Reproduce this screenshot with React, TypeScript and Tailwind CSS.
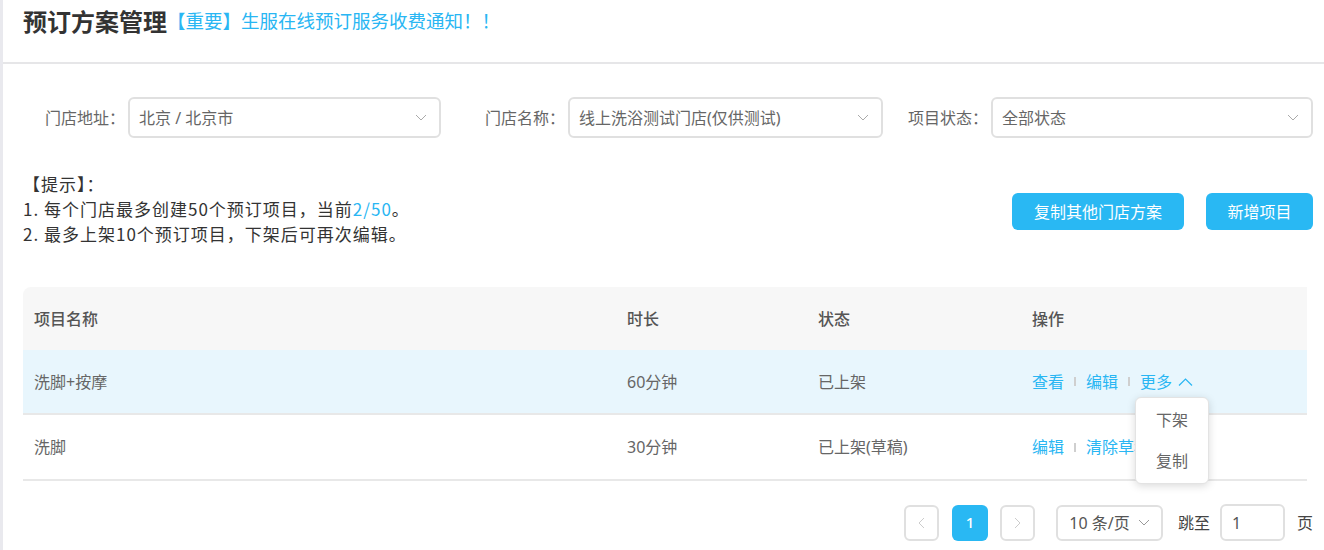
import React from "react";

const BLUE = "text-[#29b6f3]";

const ChevronDown = ({ className = "" }: { className?: string }) => (
  <svg width="12" height="7" viewBox="0 0 12 7" className={className} fill="none">
    <path d="M1 1l5 5 5-5" stroke="currentColor" strokeWidth="1" />
  </svg>
);

const FilterSelect = ({ value, width }: { value: string; width: string }) => (
  <div
    className={`${width} h-[41px] flex items-center justify-between border-2 border-[#e0e0e0] rounded-md pl-[9px] pr-[12px] bg-white`}
  >
    <span className="text-[16px] text-[#666]">{value}</span>
    <ChevronDown className="text-[#aaa]" />
  </div>
);

const Sep = () => <span className="inline-block w-[2px] h-[9px] bg-[#cfcfcf] mx-[10px]" />;

const rows = [
  { name: "洗脚+按摩", duration: "60分钟", status: "已上架", active: true },
  { name: "洗脚", duration: "30分钟", status: "已上架(草稿)", active: false },
];

export default function App() {
  return (
    <div
      className="min-h-[550px] bg-white border-l-[3px] border-[#e9e9ee]"
      style={{ fontFamily: '"Noto Sans", "Noto Sans CJK SC", sans-serif' }}
    >
      {/* Header */}
      <div className="h-[64px] border-b-2 border-[#e6e6e8] pl-[20px] pt-[5px] flex items-start">
        <span className="text-[24px] font-bold text-[#333] leading-[34px]">预订方案管理</span>
        <span className={`text-[18.5px] ${BLUE} leading-[32px]`}>【重要】生服在线预订服务收费通知！！</span>
      </div>

      <div className="pl-[20px] pr-[11px]">
        {/* Filters */}
        <div className="flex items-center pt-[33px]">
          <div className="flex items-center ml-[22px]">
            <span className="text-[16px] text-[#666] mr-[3px]">门店地址：</span>
            <FilterSelect value="北京 / 北京市" width="w-[313px]" />
          </div>
          <div className="flex items-center ml-[44px]">
            <span className="text-[16px] text-[#666] mr-[3px]">门店名称：</span>
            <FilterSelect value="线上洗浴测试门店(仅供测试)" width="w-[315px]" />
          </div>
          <div className="flex items-center ml-[25px] flex-1">
            <span className="text-[16px] text-[#666] mr-[3px]">项目状态：</span>
            <FilterSelect value="全部状态" width="flex-1" />
          </div>
        </div>

        {/* Tips + actions */}
        <div className="flex items-start justify-between mt-[33px]">
          <div
            className="text-[17px] tracking-[1px] text-[#333] leading-[25px]"
            style={{ fontFamily: '"Noto Sans CJK SC", "Noto Sans", sans-serif' }}
          >
            <p>【提示】：</p>
            <p>
              1. 每个门店最多创建50个预订项目，当前<span className={BLUE}>2/50</span>。
            </p>
            <p>2. 最多上架10个预订项目，下架后可再次编辑。</p>
          </div>
          <div className="flex gap-[22px] mt-[22px]">
            <button className="w-[172px] h-[37px] rounded-md bg-[#29b8f3] text-white text-[16px]">
              复制其他门店方案
            </button>
            <button className="w-[107px] h-[37px] rounded-md bg-[#29b8f3] text-white text-[16px]">
              新增项目
            </button>
          </div>
        </div>

        {/* Table */}
        <div className="relative mt-[41px] mr-[6px]">
          <div className="flex h-[63px] items-center bg-[#f7f7f7] rounded-tl-lg text-[16px] font-medium text-[#555]">
            <div className="w-[593px] pl-[11px]">项目名称</div>
            <div className="w-[191px] pl-[11px]">时长</div>
            <div className="w-[214px] pl-[11px]">状态</div>
            <div className="flex-1 pl-[11px]">操作</div>
          </div>
          {rows.map((r) => (
            <div
              key={r.name}
              className={`flex items-center border-b-2 border-[#e8e8e8] text-[16px] text-[#666] ${
                r.active ? "bg-[#e8f6fd] h-[65px]" : "bg-white h-[66px]"
              }`}
            >
              <div className="w-[593px] pl-[11px]">{r.name}</div>
              <div className="w-[191px] pl-[11px]">{r.duration}</div>
              <div className="w-[214px] pl-[11px]">{r.status}</div>
              <div className={`flex-1 pl-[11px] flex items-center ${BLUE}`}>
                {r.active ? (
                  <>
                    <span>查看</span>
                    <Sep />
                    <span>编辑</span>
                    <Sep />
                    <span className="flex items-center">
                      更多
                      <svg width="15" height="8" viewBox="0 0 15 8" className="ml-[6px]" fill="none">
                        <path d="M1 7.5l6.5-6.5 6.5 6.5" stroke="currentColor" strokeWidth="1.2" />
                      </svg>
                    </span>
                  </>
                ) : (
                  <>
                    <span>编辑</span>
                    <Sep />
                    <span>清除草稿</span>
                  </>
                )}
              </div>
            </div>
          ))}

          {/* More dropdown */}
          <div className="absolute left-[1112px] top-[110px] w-[74px] h-[87px] bg-white border border-[#e3e3e3] rounded-md shadow-[0_2px_8px_rgba(0,0,0,0.15)] flex flex-col items-center justify-center gap-[17px] text-[16px] text-[#666]">
            <span>下架</span>
            <span>复制</span>
          </div>
        </div>

        {/* Pagination */}
        <div className="flex items-center justify-end mt-[23px] text-[16px]">
          <button className="w-[35px] h-[36px] border-2 border-[#e0e0e0] rounded-md flex items-center justify-center text-[#ccc]">
            <svg width="7" height="12" viewBox="0 0 7 12" fill="none">
              <path d="M6 1L1 6l5 5" stroke="currentColor" strokeWidth="1" />
            </svg>
          </button>
          <button className="w-[36px] h-[36px] ml-[13px] rounded-md bg-[#29b8f3] text-white text-[15px] font-medium">
            1
          </button>
          <button className="w-[35px] h-[36px] ml-[12px] border-2 border-[#e0e0e0] rounded-md flex items-center justify-center text-[#ccc]">
            <svg width="7" height="12" viewBox="0 0 7 12" fill="none">
              <path d="M1 1l5 5-5 5" stroke="currentColor" strokeWidth="1" />
            </svg>
          </button>
          <div className="w-[107px] h-[36px] ml-[21px] border-2 border-[#e0e0e0] rounded-md flex items-center justify-center gap-[8px] text-[#555] text-[16px]">
            <span>10 条/页</span>
            <ChevronDown className="text-[#999]" />
          </div>
          <span className="ml-[15px] text-[#444]">跳至</span>
          <div className="w-[65px] h-[37px] ml-[10px] border-2 border-[#e0e0e0] rounded-md flex items-center pl-[10px] text-[#555] text-[16px]">
            1
          </div>
          <span className="ml-[12px] text-[#444]">页</span>
        </div>
      </div>
    </div>
  );
}
